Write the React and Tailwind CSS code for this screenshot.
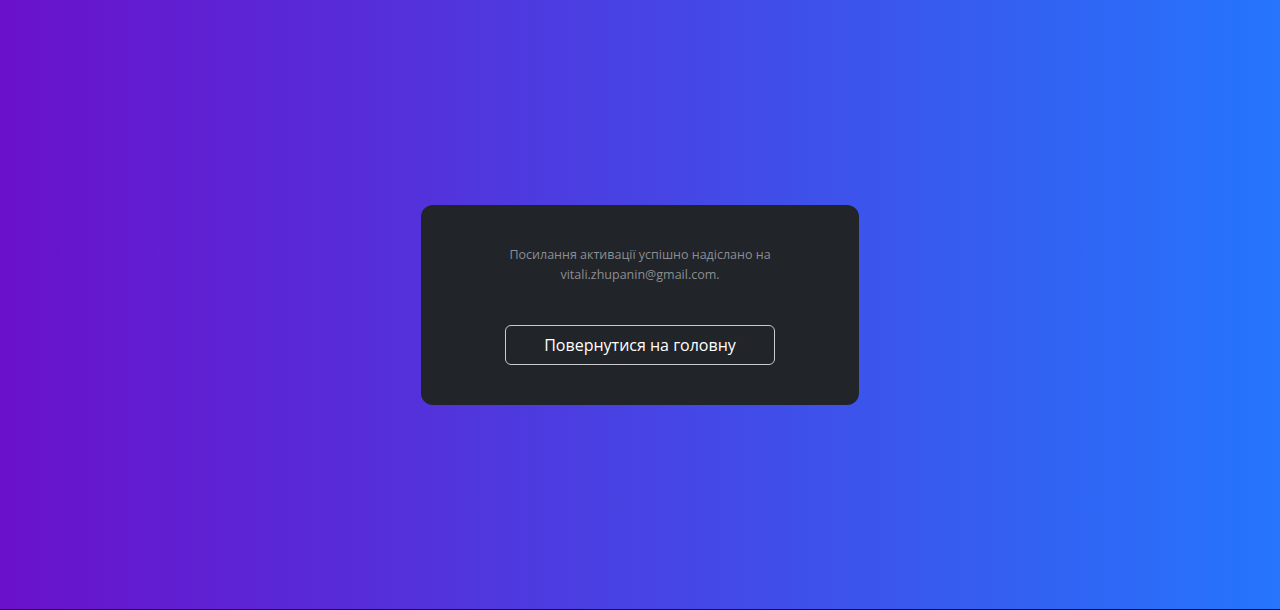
export default function App() {
  return (
    <div
      className="flex h-[610px] w-full flex-col bg-[linear-gradient(to_right,#6a11cb,#2575fc)]"
      style={{ fontFamily: '"Open Sans", "Noto Sans", sans-serif' }}
    >
      <div className="flex flex-1 items-center justify-center">
        <div className="flex w-[438px] flex-col items-center rounded-xl bg-[#212428] px-10 pt-10 pb-10">
          <p className="max-w-[270px] text-center text-[12.5px] leading-5 text-[#8b8e93]">
            Посилання активації успішно надіслано на vitali.zhupanin@gmail.com.
          </p>
          <button className="mt-10 h-10 w-[270px] rounded-md border border-[#c9cbce] text-[16px] text-white">
            Повернутися на головну
          </button>
        </div>
      </div>
      <div className="h-px bg-[#1c0b4d]" />
    </div>
  );
}
